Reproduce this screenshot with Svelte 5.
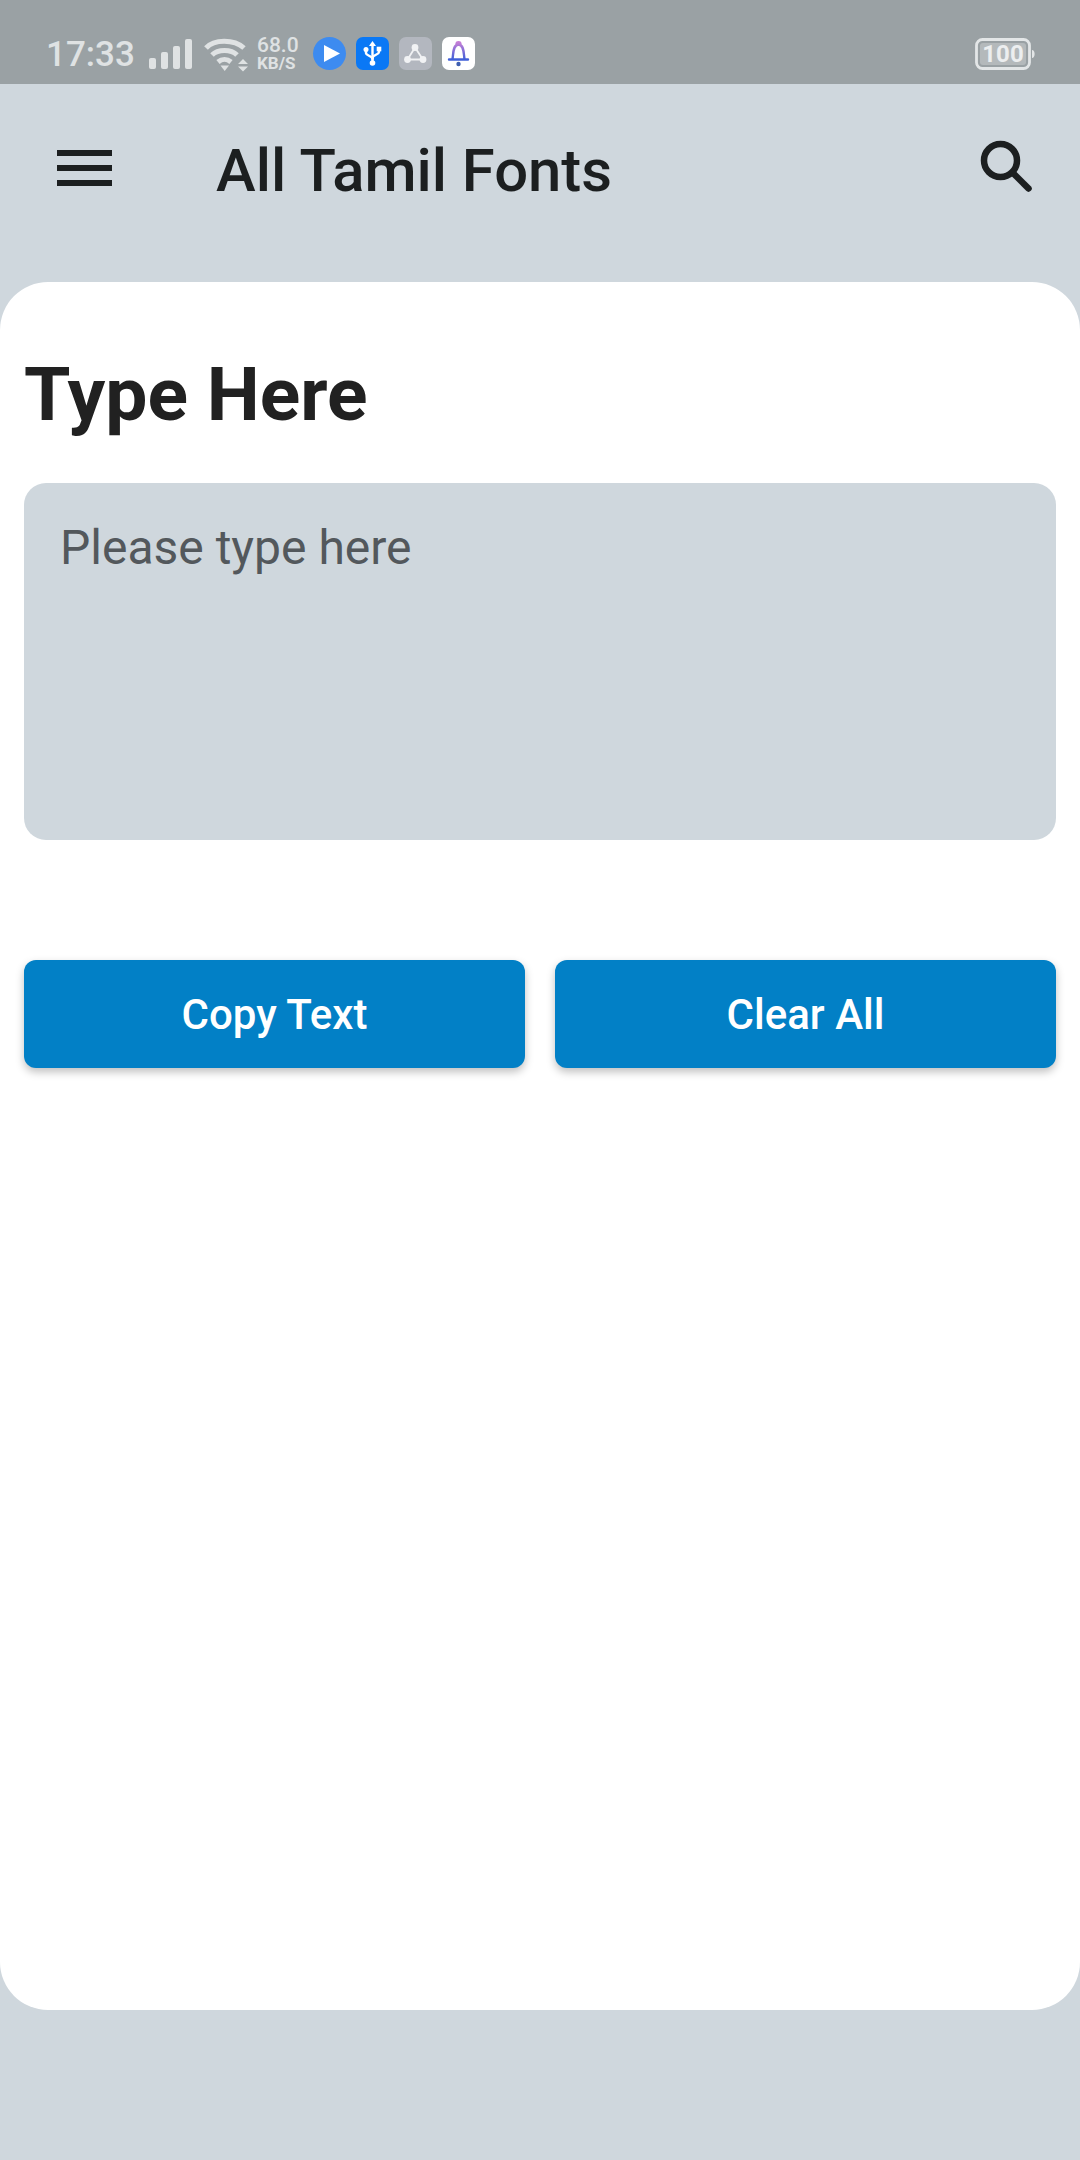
<script>
  let text = $state('');
</script>

<div class="page">
  <div class="statusbar">
    <span class="time">17:33</span>
    <svg class="signal" width="43" height="30" viewBox="0 0 43 30" fill="#dfe2e3">
      <rect x="0" y="19" width="7" height="11" rx="2"/>
      <rect x="12" y="13" width="7" height="17" rx="2"/>
      <rect x="24" y="7" width="7" height="23" rx="2"/>
      <rect x="36" y="0" width="7" height="30" rx="2"/>
    </svg>
    <svg class="wifi" width="44" height="34" viewBox="0 0 44 34">
      <g fill="none" stroke="#dfe2e3" stroke-width="5">
        <path d="M2 10 C 10 1, 30 1, 40 10"/>
        <path d="M8 17 C 14 11, 27 11, 33 17"/>
        <path d="M14 24 C 18 20.5, 23 20.5, 27 24"/>
      </g>
      <path d="M16.5 27.5 L25 27.5 L20.7 33 Z" fill="#dfe2e3"/>
      <path d="M34 26 L44 26 L39 21 Z M34 28.5 L44 28.5 L39 33.5 Z" fill="#dfe2e3"/>
    </svg>
    <div class="speed"><span>68.0</span><span class="unit">KB/S</span></div>
    <div class="apps">
      <div class="app play">
        <svg width="33" height="33" viewBox="0 0 33 33"><path d="M11 8 L27 16.5 L11 25 Z" fill="#fff"/></svg>
      </div>
      <div class="app usb">
        <svg width="33" height="33" viewBox="0 0 33 33">
          <g fill="none" stroke="#fff" stroke-width="2.4" stroke-linecap="round">
            <path d="M16.5 7 V26"/>
            <path d="M10 13 V16 C10 18.5 16.5 19 16.5 22"/>
            <path d="M23 12 V15 C23 17.5 16.5 18 16.5 21"/>
          </g>
          <path d="M16.5 4 L20 9 H13 Z" fill="#fff"/>
          <circle cx="16.5" cy="26" r="2.8" fill="#fff"/>
          <circle cx="10" cy="12.5" r="2.5" fill="#fff"/>
          <rect x="20.7" y="9.7" width="4.6" height="4.6" fill="#fff"/>
        </svg>
      </div>
      <div class="app nodes">
        <svg width="33" height="33" viewBox="0 0 33 33">
          <path d="M16 10.5 L8.5 22.5 H24 Z" fill="none" stroke="#f1f2f4" stroke-width="1.8"/>
          <circle cx="16" cy="10.5" r="3.4" fill="#f1f2f4"/>
          <circle cx="8.5" cy="22.5" r="3.4" fill="#f1f2f4"/>
          <circle cx="24" cy="22.5" r="3.4" fill="#f1f2f4"/>
        </svg>
      </div>
      <div class="app bell">
        <svg width="33" height="33" viewBox="0 0 33 33">
          <defs>
            <linearGradient id="bellgrad" x1="0" y1="0" x2="0" y2="1">
              <stop offset="0" stop-color="#c77fd6"/>
              <stop offset="1" stop-color="#3f5fd8"/>
            </linearGradient>
          </defs>
          <path d="M14.5 7.5 C14.5 4.5 18.5 4.5 18.5 7.5 M10.5 22 C11.5 17 10.5 8 16.5 7.5 C22.5 8 21.5 17 22.5 22 M7 22.5 H26" fill="none" stroke="url(#bellgrad)" stroke-width="2.4" stroke-linecap="round"/>
          <circle cx="16.5" cy="27" r="2.2" fill="#3f5fb0"/>
        </svg>
      </div>
    </div>
    <div class="battery">
      <svg width="60" height="32" viewBox="0 0 60 32">
        <rect x="1.5" y="1.5" width="53" height="29" rx="6" fill="none" stroke="#e3e6e7" stroke-width="2.8"/>
        <rect x="5" y="5" width="46" height="22" rx="3" fill="#b4b9bb"/>
        <path d="M57 12 C60.5 12 60.5 20 57 20 Z" fill="#e3e6e7"/>
      </svg>
      <span class="level">100</span>
    </div>
  </div>

  <header class="appbar">
    <button class="iconbtn menu" aria-label="Menu">
      <span></span><span></span><span></span>
    </button>
    <h1>All Tamil Fonts</h1>
    <button class="iconbtn search" aria-label="Search">
      <svg width="56" height="56" viewBox="0 0 56 56" fill="none" stroke="#1c1f20" stroke-width="6.5" stroke-linecap="round">
        <circle cx="24.5" cy="24.5" r="16.5"/>
        <path d="M37 37 L52.5 52.5"/>
      </svg>
    </button>
  </header>

  <main class="card">
    <h2>Type Here</h2>
    <textarea bind:value={text} placeholder="Please type here"></textarea>
    <div class="actions">
      <button class="action" onclick={() => navigator.clipboard?.writeText(text)}>Copy Text</button>
      <button class="action" onclick={() => (text = '')}>Clear All</button>
    </div>
  </main>
</div>

<style>
  :global(body) { margin: 0; background: #cfd7dd; }

  .page {
    height: 2160px;
    background: #cfd7dd;
    font-family: Roboto, "Liberation Sans", sans-serif;
    overflow: hidden;
  }

  .statusbar {
    height: 84px;
    box-sizing: border-box;
    background: #9aa1a4;
    display: flex;
    align-items: flex-start;
    padding: 0 45px 0 46px;
    color: #dfe2e3;
  }
  .time { font-size: 35px; line-height: 36px; width: 103px; margin-top: 37px; font-weight: 500; }
  .signal { margin-top: 39px; }
  .wifi { margin: 38px 0 0 12px; }
  .speed {
    margin: 36px 0 0 9px;
    width: 42px;
    display: flex;
    flex-direction: column;
    font-size: 21px;
    font-weight: 500;
    line-height: 19px;
  }
  .speed .unit { font-size: 17px; line-height: 17px; font-weight: 700; }
  .apps { display: flex; gap: 10px; margin: 37px 0 0 14px; }
  .app { width: 33px; height: 33px; border-radius: 7px; }
  .app svg { display: block; }
  .play { background: #3d8bf0; border-radius: 50%; }
  .usb { background: #0a78f5; }
  .nodes { background: #b3b7bf; }
  .bell { background: #fff; }

  .battery { margin: 38px 0 0 auto; position: relative; width: 60px; height: 32px; }
  .battery svg { display: block; }
  .level {
    position: absolute;
    left: 0;
    top: 0;
    width: 56px;
    text-align: center;
    font-size: 24px;
    line-height: 33px;
    font-weight: 700;
    color: #eceeef;
  }

  .appbar {
    height: 198px;
    box-sizing: border-box;
    display: flex;
    align-items: flex-start;
    padding-top: 52px;
  }
  .iconbtn { background: none; border: 0; padding: 0; }
  .menu {
    width: 55px;
    height: 36px;
    margin: 14px 0 0 57px;
    display: flex;
    flex-direction: column;
    justify-content: space-between;
  }
  .menu span { display: block; height: 6px; background: #1c1f20; }
  h1 {
    margin: 2px 0 0 104px;
    font-size: 59.8px;
    line-height: 66px;
    font-weight: 500;
    color: #1c1f20;
    flex: 1;
  }
  .search { width: 56px; height: 56px; margin: 0 48px 0 0; }
  .search svg { display: block; }

  .card {
    height: 1728px;
    box-sizing: border-box;
    background: #fff;
    border-radius: 48px;
    padding: 68px 24px 0;
  }
  h2 {
    margin: 0 0 45px;
    font-size: 75px;
    line-height: 88px;
    font-weight: 700;
    color: #212121;
  }
  textarea {
    display: block;
    width: 100%;
    height: 357px;
    box-sizing: border-box;
    border: 0;
    outline: 0;
    resize: none;
    background: #cfd7dd;
    border-radius: 22px;
    padding: 37px 36px;
    font: 400 48px/56px Roboto, "Liberation Sans", sans-serif;
    color: #212121;
  }
  textarea::placeholder { color: #53585c; opacity: 1; }

  .actions {
    display: flex;
    gap: 30px;
    margin-top: 120px;
  }
  .action {
    flex: 1;
    height: 108px;
    border: 0;
    border-radius: 12px;
    background: #0280c6;
    color: #fff;
    font: 500 42px Roboto, "Liberation Sans", sans-serif;
    box-shadow: 0 4px 9px rgba(0, 0, 0, 0.25);
  }
</style>
